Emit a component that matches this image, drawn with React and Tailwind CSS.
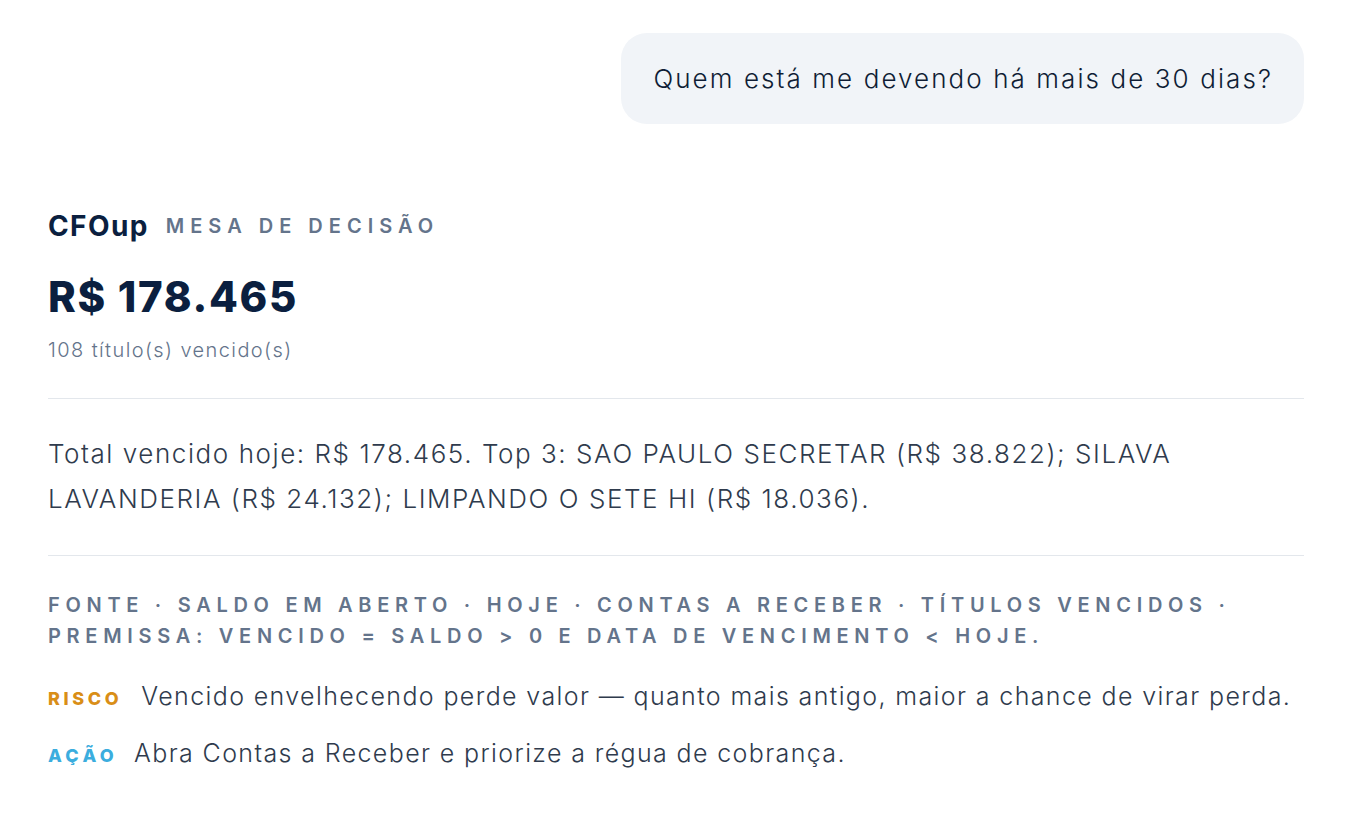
import React from 'react';

// Chat answer card: user question bubble + "Mesa de decisão" summary
const FONT = { fontFamily: 'Inter, "Open Sans", "Noto Sans", sans-serif' };

const Divider = () => <div className="h-px w-full bg-[#e3e7ec]" />;

function Tag({ color, children }) {
    return (
        <span className={`text-[18px] font-extrabold tracking-[0.2em] uppercase ${color}`}>{children}</span>
    );
}

export default function App() {
    return (
        <div className="min-h-screen bg-white px-12 pt-[33px]" style={FONT}>
            {/* Question bubble */}
            <div className="flex justify-end">
                <div className="flex h-[91px] items-center rounded-[26px] bg-[#f1f4f8] pl-8 pr-[31px] text-[26px] font-light tracking-[0.08em] text-[#0f1d35]">
                    Quem está me devendo há mais de 30 dias?
                </div>
            </div>

            {/* Answer card */}
            <div className="mt-[86px]">
                <div className="flex h-8 items-center gap-[17px]">
                    <span className="text-[28px] font-bold tracking-[0.05em] text-[#0b1f3f]">CFOup</span>
                    <span className="text-[20px] font-semibold tracking-[0.3em] text-[#64748b] uppercase">Mesa de decisão</span>
                </div>
                <div className="mt-[30px] flex h-12 items-center text-[42px] font-extrabold tracking-[0.04em] text-[#0b1f3f]">
                    R$ 178.465
                </div>
                <div className="mt-4 flex h-7 items-center text-[20px] font-light tracking-[0.07em] text-[#64748b]">
                    108 título(s) vencido(s)
                </div>
                <div className="mt-[34px]">
                    <Divider />
                </div>
                <p className="mt-8 text-[26px] leading-[45px] font-light tracking-[0.06em] text-[#2f3b4d]">
                    Total vencido hoje: R$ 178.465. Top 3: SAO PAULO SECRETAR (R$ 38.822); SILAVA LAVANDERIA (R$ 24.132); LIMPANDO O SETE HI (R$ 18.036).
                </p>
                <div className="mt-[34px]">
                    <Divider />
                </div>
                <p className="mt-[34px] text-[20px] leading-[31px] font-semibold tracking-[0.285em] text-[#64748b] uppercase">
                    Fonte · Saldo em aberto · hoje · Contas a receber · Títulos vencidos · Premissa: vencido = saldo &gt; 0 e data de vencimento &lt; hoje.
                </p>
                <div className="mt-7 flex items-baseline gap-[19px] leading-8">
                    <Tag color="text-[#d98e17]">Risco</Tag>
                    <span className="text-[25px] font-light tracking-[0.055em] text-[#2f3b4d]">
                        Vencido envelhecendo perde valor — quanto mais antigo, maior a chance de virar perda.
                    </span>
                </div>
                <div className="mt-[22px] flex items-baseline gap-[16px] leading-8">
                    <Tag color="text-[#3badde] tracking-[0.24em]">Ação</Tag>
                    <span className="text-[25px] font-light tracking-[0.055em] text-[#2f3b4d]">
                        Abra Contas a Receber e priorize a régua de cobrança.
                    </span>
                </div>
            </div>
        </div>
    );
}
